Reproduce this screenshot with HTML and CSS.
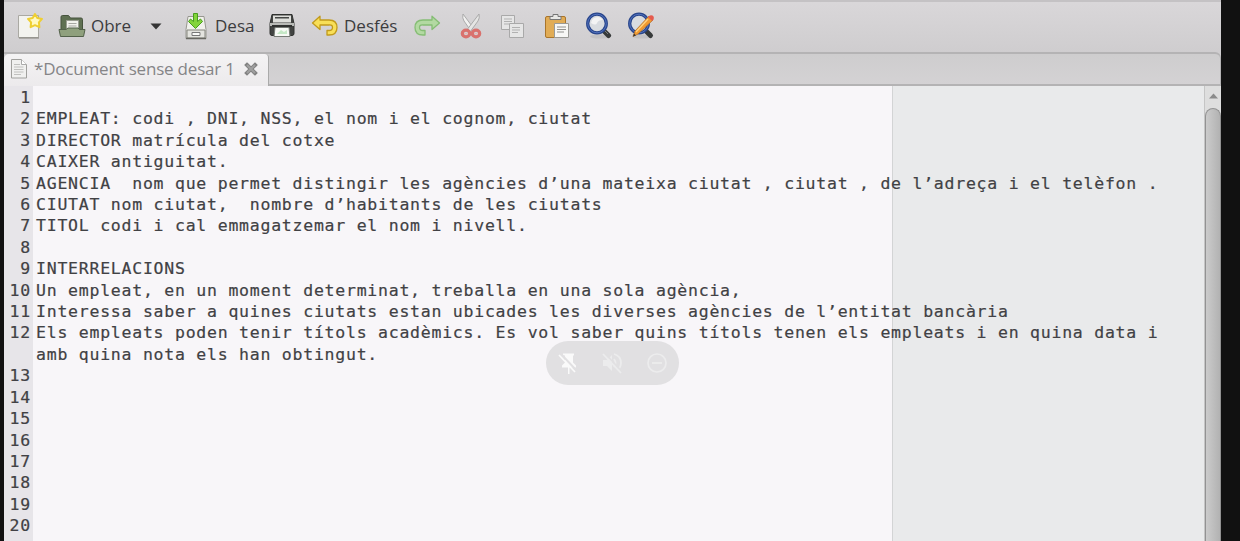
FILE: index.html
```html
<!DOCTYPE html>
<html lang="ca">
<head>
<meta charset="utf-8">
<title>Document sense desar 1</title>
<link rel="stylesheet" href="styles.css">
</head>
<body>
<div class="window">
  <header class="toolbar">
    <svg class="icon new" width="26" height="26" viewBox="0 0 26 26">
      <path d="M1.500 2.500h20v22h-20z" fill="#f3f3ef" stroke="#aaa9a3"/>
      <path d="M2 25h20" stroke="#85837d"/>
      <path d="M18 1l2.300 4 4.700.9-3.100 3.500.5 4.800-4.400-2-4.400 2 .5-4.800L11 5.900l4.700-.9z" fill="#fff9c0" stroke="#efcf32" stroke-width="2" stroke-linejoin="round"/>
    </svg>
    <button class="button open">
      <svg width="28" height="24" viewBox="0 0 28 24">
        <path d="M3 17V3q0-1.500 1.500-1.500h6L12.500 4H23q1.500 0 1.500 1.500V17z" fill="#5f7052" stroke="#46533d"/>
        <path d="M8.500 6.500h12V17h-12z" fill="#f2f2ed" stroke="#9a9d92"/>
        <path d="M10.500 9.500h8m-8 2.500h8" stroke="#a7a7a2"/>
        <path d="M1 15.500h7l2-1.500h10l1.500 1.500H27l-1.500 7h-23z" fill="#8fa07d" stroke="#53614a"/>
      </svg>
      <span>Obre</span>
    </button>
    <svg class="arrow" width="12" height="7" viewBox="0 0 12 7"><path d="M.5.5h11L6 6.500z" fill="#353535"/></svg>
    <button class="button save">
      <svg width="22" height="28" viewBox="0 0 22 28">
        <path d="M3 4.500h16l2 13v9H1v-9z" fill="#f1f1ec" stroke="#979790"/>
        <path d="M2 18h18v8H2z" fill="#e4e4df" stroke="#85857f"/>
        <path d="M7 20.500h8v3H7z" fill="#fafaf8" stroke="#777"/>
        <path d="M1 26.500h20" stroke="#686862" stroke-width="1.500"/>
        <path d="M8.500 1.500h4v8l3-2.500 2 2.500-7 7-7-7 2-2.500 3 2.500z" fill="#83d43b" stroke="#489e1d" stroke-linejoin="round"/>
      </svg>
      <span>Desa</span>
    </button>
    <svg class="icon print" width="28" height="26" viewBox="0 0 28 26">
      <path d="M4 1.500h20l2 9v10q0 2-2 2H4q-2 0-2-2v-10z" fill="#424442" stroke="#303230"/>
      <path d="M5 2.500h18v7H5z" fill="#dedfdb"/>
      <path d="M7 4h14v1.500H7z" fill="#454745"/>
      <path d="M2 10h24v3H2z" fill="#b9bbb7"/>
      <path d="M4 12h20v2H4z" fill="#303230"/>
      <path d="M7 14.500h14l1 9H6z" fill="#f7faf5" stroke="#777c76"/>
      <path d="M9 21l4-4 3 2 3-2v4z" fill="#c5e8c6"/>
    </svg>
    <button class="button undo">
      <svg width="28" height="22" viewBox="0 0 28 22">
        <path d="M1.500 8L9 1.200V5h9q8 0 8 7.500Q26 20 18 20h-2v-4.500h2q3.500 0 3.500-3T18 10H9v4.500z" fill="#f8df58" stroke="#c19a1b" stroke-width="1.300" stroke-linejoin="round"/>
      </svg>
      <span>Desfés</span>
    </button>
    <svg class="icon redo" width="28" height="22" viewBox="0 0 28 22">
      <path d="M26.500 8L19 1.200V5h-9q-8 0-8 7.500Q2 20 10 20h2v-4.500h-2q-3.500 0-3.500-3T10 10h9v4.500z" fill="#b3d9a2" stroke="#85bd74" stroke-width="1.300" stroke-linejoin="round"/>
    </svg>
    <svg class="icon cut" width="22" height="27" viewBox="0 0 22 27">
      <path d="M3 1q-1 4 1 7l7 10 2-3.500z" fill="#f1f1f0" stroke="#aaa"/>
      <path d="M19 1q1 4-1 7l-8 11-2-3.500z" fill="#e5e5e4" stroke="#aaa"/>
      <g fill="none" stroke="#d9716d" stroke-width="3.200"><ellipse cx="6" cy="20.500" rx="3.700" ry="3.300"/><ellipse cx="16" cy="20.500" rx="3.700" ry="3.300"/></g>
      <path d="M4.500 20.500h3m7 0h3" stroke="#eeb3b0"/>
    </svg>
    <svg class="icon copy" width="25" height="25" viewBox="0 0 25 25">
      <g fill="#e6e6e6" stroke="#a9a9a9"><path d="M1.500 1.500h13v14h-13z"/><path d="M9.500 9.500h14v14h-14z"/></g>
      <path d="M4 5h8M4 7.500h8M4 10h5M12 13.500h8M12 16h8M12 18.500h6" stroke="#b1b1b1"/>
    </svg>
    <svg class="icon paste" width="26" height="27" viewBox="0 0 26 27">
      <rect x="1.500" y="3.500" width="20" height="21" rx="1.500" fill="#e1ac55" stroke="#a9752b"/>
      <path d="M6 6.500V3.500h3v-2h5v2h3v3z" fill="#e8e8e6" stroke="#777"/>
      <path d="M10.500 10.500h14v14h-14z" fill="#f7f7f5" stroke="#9a9a96"/>
      <path d="M13 14h9m-9 2.500h9m-9 2.500h7" stroke="#92928f"/>
    </svg>
    <svg class="icon find" width="27" height="28" viewBox="0 0 27 28">
      <ellipse cx="15" cy="24.500" rx="10" ry="2" fill="#c3c2c4"/>
      <path d="M18.500 18.500l5 5" stroke="#373a3a" stroke-width="5" stroke-linecap="round"/>
      <path d="M19 18l4 4" stroke="#777b7b"/>
      <circle cx="12" cy="11.500" r="9.300" fill="#d9dce0" stroke="#29468c" stroke-width="3.300"/>
      <circle cx="12" cy="11.500" r="9.300" fill="none" stroke="#5272bd"/>
      <path d="M6 11q1-6 7-6 3 0 5 3-5 0-6 3t-6 0z" fill="#f4f4f4"/>
    </svg>
    <svg class="icon replace" width="28" height="28" viewBox="0 0 28 28">
      <ellipse cx="15" cy="24.500" rx="10" ry="2" fill="#c3c2c4"/>
      <path d="M18.500 18.500l5 5" stroke="#373a3a" stroke-width="5" stroke-linecap="round"/>
      <circle cx="12" cy="11.500" r="9.300" fill="#d9dce0" stroke="#29468c" stroke-width="3.300"/>
      <circle cx="12" cy="11.500" r="9.300" fill="none" stroke="#5272bd"/>
      <path d="M22 4l4 4L11 22l-5 2.500L8 19z" fill="#f19a31" stroke="#aa6924" stroke-width=".7"/>
      <path d="M21 7L9 20" stroke="#ffd383" stroke-width="1.300"/>
      <path d="M21.500 4.500q2-2 4-1t1 4L25 9l-4-4z" fill="#e55b4e"/>
      <path d="M6 24.500l1-3 2 2z" fill="#343434"/>
    </svg>
  </header>
  <nav class="tabs">
    <div class="tab">
      <svg class="page" width="16" height="20" viewBox="0 0 16 20">
        <path d="M.5.500h10l5 5v13.500H.5z" fill="#f0f0ef" stroke="#a0a09d"/>
        <path d="M10.500.5v5h5" fill="#fff" stroke="#aaa"/>
        <path d="M3 5.500h6M3 8h9.500M3 10.500h9.500M3 13h9.500M3 15.500h7" stroke="#c0c0be"/>
      </svg>
      <span>*Document sense desar 1</span>
      <svg class="close" width="14" height="14" viewBox="0 0 14 14"><path d="M3 3l8 8m0-8l-8 8" stroke="#828282" stroke-width="4" stroke-linecap="square"/><path d="M3 3l8 8m0-8l-8 8" stroke="#a0a0a0" stroke-width="2"/></svg>
    </div>
  </nav>
  <main class="editor">
    <div class="lines">
      <div class="line"><b>1</b><p></p></div>
      <div class="line"><b>2</b><p>EMPLEAT: codi , DNI, NSS, el nom i el cognom, ciutat</p></div>
      <div class="line"><b>3</b><p>DIRECTOR matrícula del cotxe</p></div>
      <div class="line"><b>4</b><p>CAIXER antiguitat.</p></div>
      <div class="line"><b>5</b><p>AGENCIA  nom que permet distingir les agències d’una mateixa ciutat , ciutat , de l’adreça i el telèfon .</p></div>
      <div class="line"><b>6</b><p>CIUTAT nom ciutat,  nombre d’habitants de les ciutats</p></div>
      <div class="line"><b>7</b><p>TITOL codi i cal emmagatzemar el nom i nivell.</p></div>
      <div class="line"><b>8</b><p></p></div>
      <div class="line"><b>9</b><p>INTERRELACIONS</p></div>
      <div class="line"><b>10</b><p>Un empleat, en un moment determinat, treballa en una sola agència,</p></div>
      <div class="line"><b>11</b><p>Interessa saber a quines ciutats estan ubicades les diverses agències de l’entitat bancària</p></div>
      <div class="line"><b>12</b><p>Els empleats poden tenir títols acadèmics. Es vol saber quins títols tenen els empleats i en quina data i amb quina nota els han obtingut.</p></div>
      <div class="line"><b>13</b><p></p></div>
      <div class="line"><b>14</b><p></p></div>
      <div class="line"><b>15</b><p></p></div>
      <div class="line"><b>16</b><p></p></div>
      <div class="line"><b>17</b><p></p></div>
      <div class="line"><b>18</b><p></p></div>
      <div class="line"><b>19</b><p></p></div>
      <div class="line"><b>20</b><p></p></div>
      <div class="line"><b>21</b><p></p></div>
    </div>
    <aside class="scrollbar">
      <svg class="up" width="9" height="6" viewBox="0 0 9 6"><path d="M4.500.5L9 5.500H0z" fill="#8b8b8b"/></svg>
      <div class="thumb"></div>
    </aside>
  </main>
</div>
<div class="overlay">
  <svg width="20" height="22" viewBox="0 0 20 22" fill="#fafafa"><path d="M5 1.500h11v2h-1v7l3 3v2h-6.500V22H10v-6.500H4v-2l3-3v-7H5z"/><path d="M2.500 1.500l16 17" stroke="#e1e0e2" stroke-width="2"/><path d="M1 3l16 17" stroke="#fafafa" stroke-width="1.700"/></svg>
  <svg width="22" height="22" viewBox="0 0 22 22" fill="none" stroke="#ececed" stroke-width="1.800"><path d="M2 8h4l5-5v16l-5-5H2z" fill="#ececed" stroke="none"/><path d="M13 7q3 4 0 8M13 2q7 2 7 9 0 3-2 6"/><path d="M3.500 1l17 18" stroke="#e1e0e2"/><path d="M2 2l18 19"/></svg>
  <svg width="22" height="22" viewBox="0 0 22 22" fill="none" stroke="#ececed" stroke-width="1.700"><circle cx="11" cy="11" r="9"/><path d="M6 11h10"/></svg>
</div>
</body>
</html>
```
FILE: styles.css
```css
* { box-sizing: border-box; }
body {
  margin: 0;
  height: 541px;
  overflow: hidden;
  background: #111;
  font-family: "Open Sans", "Noto Sans", sans-serif;
}
svg { display: block; flex: none; }
.window {
  display: flex;
  flex-direction: column;
  width: 1217px;
  height: 541px;
  margin-left: 4px;
  overflow: hidden;
  background: #cfcdcf;
}
.toolbar {
  display: flex;
  align-items: center;
  height: 52px;
  flex: none;
  padding: 0 0 2px 13px;
  border-top: 2px solid #c4c2c4;
  background: linear-gradient(#d9d7d9, #cfcdcf);
}
.button {
  display: flex;
  align-items: center;
  padding: 0;
  border: 0;
  background: none;
  color: #3c3c3e;
  font: 17px "Open Sans", "Noto Sans", sans-serif;
}
.button span { line-height: 24px; white-space: nowrap; }
.open { width: 78px; margin-left: 15px; gap: 5px; }
.arrow { margin-left: 14px; }
.save { width: 70px; margin-left: 23px; gap: 8px; }
.print { margin-left: 13px; }
.undo { width: 87px; margin-left: 15px; gap: 5px; }
.redo { margin-left: 15px; }
.cut { margin-left: 19px; }
.copy { margin-left: 18px; }
.paste { margin-left: 19px; }
.find { margin-left: 15px; }
.replace { margin-left: 15px; }
.tabs {
  height: 34px;
  flex: none;
  border: solid #b4b3b4;
  border-width: 2px 1px 2px 0;
  border-radius: 0 6px 0 0;
  background: linear-gradient(#cecdce, #d4d2d4);
}
.tab {
  display: flex;
  align-items: center;
  width: 265px;
  height: 32px;
  padding: 0 0 3px 7px;
  border-right: 1px solid #aaa;
  border-radius: 5px 4px 0 0;
  background: linear-gradient(#f4f3f4, #eceaec);
  color: #858587;
  font-size: 17px;
}
.tab span { width: 202px; margin-left: 7px; white-space: nowrap; letter-spacing: -.2px; }
.close { margin-left: 8px; }
.editor { display: flex; flex: 1; min-height: 0; }
.lines {
  flex: 1;
  padding-top: 1px;
  background: linear-gradient(90deg, #e7e5e9 29px, #f8f6f9 29px 888px, #d3d4d5 888px 889px, #e9eaeb 889px);
  color: #414144;
  font: 16.5px/21.400px "DejaVu Sans Mono", monospace;
  letter-spacing: .755px;
  -webkit-text-stroke: .2px #414144;
}
.line { display: flex; }
.line b { width: 27px; flex: none; text-align: right; font-weight: 400; }
.line p {
  flex: 1;
  min-height: 21.400px;
  margin: 0;
  padding: 0 38px 0 5px;
  white-space: pre-wrap;
}
.scrollbar {
  display: flex;
  flex-direction: column;
  align-items: center;
  width: 17px;
  flex: none;
  border-left: 1px solid #c5c5c5;
  background: #dedede;
}
.up { margin: 7px 0 9px; }
.thumb {
  width: 16px;
  flex: 1;
  border: 1px solid #929292;
  border-bottom: 0;
  border-radius: 8px 8px 0 0;
  background: linear-gradient(90deg, #cbcbcb, #b2b2b2);
}
.overlay {
  position: absolute;
  left: 546px;
  top: 341px;
  display: flex;
  align-items: center;
  gap: 23px;
  width: 133px;
  height: 44px;
  padding-left: 12px;
  border-radius: 22px;
  background: #e1e0e2;
}
```
